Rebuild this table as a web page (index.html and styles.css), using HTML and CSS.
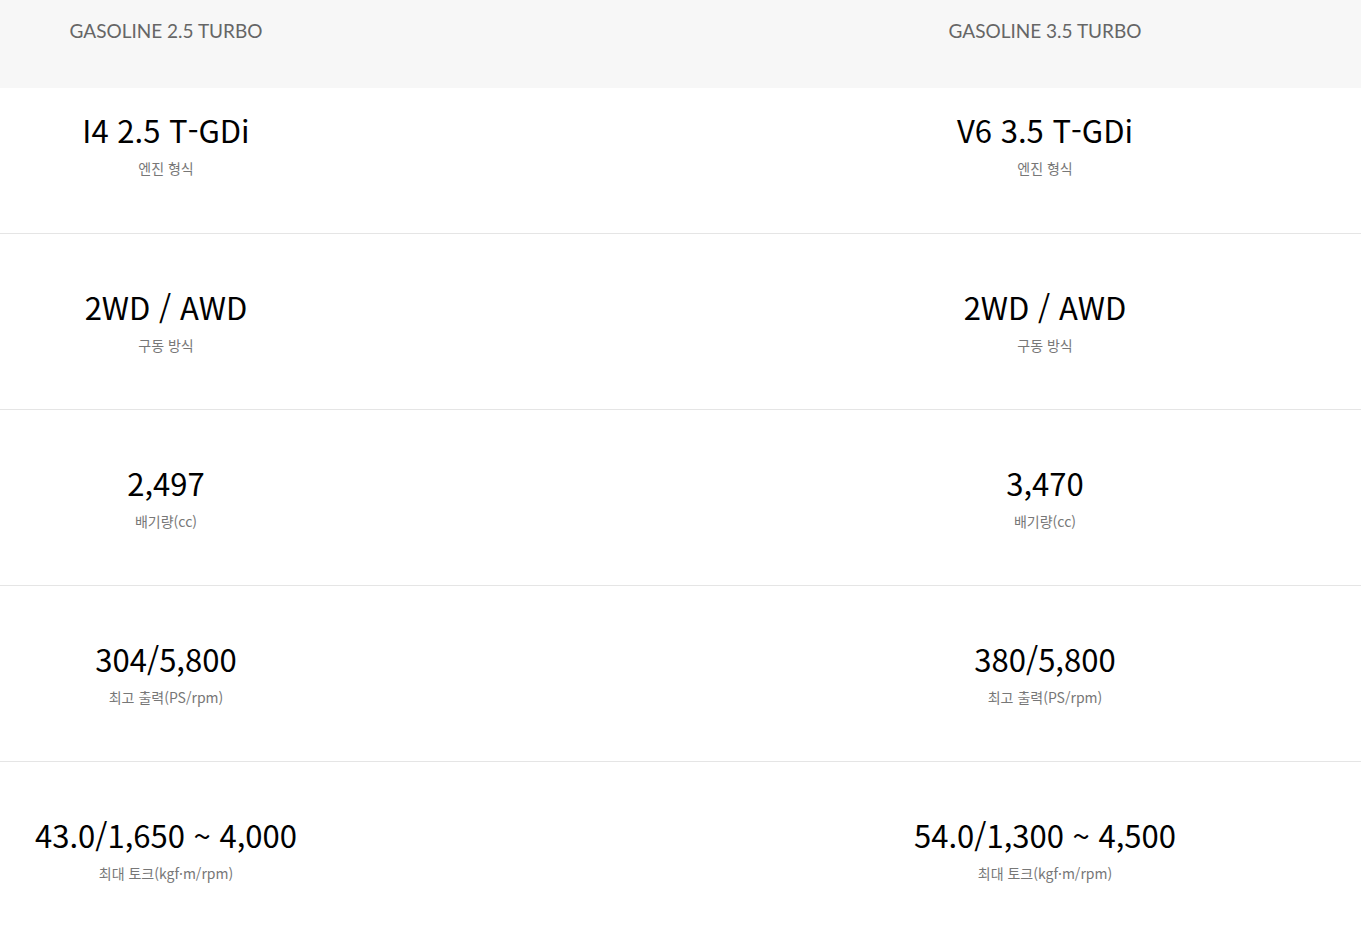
FILE: index.html
```
<!DOCTYPE html>
<html lang="ko">
<head>
<meta charset="utf-8">
<link rel="stylesheet" href="styles.css">
</head>
<body>
<div class="spec">
  <div class="head">
    <div class="col"><span class="trim">GASOLINE 2.5 TURBO</span></div>
    <div class="col"><span class="trim">GASOLINE 3.5 TURBO</span></div>
  </div>
  <div class="row first">
    <div class="col"><div class="val">I4 2.5 T-GDi</div><div class="lbl">엔진 형식</div></div>
    <div class="col"><div class="val">V6 3.5 T-GDi</div><div class="lbl">엔진 형식</div></div>
  </div>
  <div class="row">
    <div class="col"><div class="val">2WD / AWD</div><div class="lbl">구동 방식</div></div>
    <div class="col"><div class="val">2WD / AWD</div><div class="lbl">구동 방식</div></div>
  </div>
  <div class="row">
    <div class="col"><div class="val">2,497</div><div class="lbl">배기량(cc)</div></div>
    <div class="col"><div class="val">3,470</div><div class="lbl">배기량(cc)</div></div>
  </div>
  <div class="row">
    <div class="col"><div class="val">304/5,800</div><div class="lbl">최고 출력(PS/rpm)</div></div>
    <div class="col"><div class="val">380/5,800</div><div class="lbl">최고 출력(PS/rpm)</div></div>
  </div>
  <div class="row last">
    <div class="col"><div class="val">43.0/1,650 ~ 4,000</div><div class="lbl">최대 토크(kgf·m/rpm)</div></div>
    <div class="col"><div class="val">54.0/1,300 ~ 4,500</div><div class="lbl">최대 토크(kgf·m/rpm)</div></div>
  </div>
</div>
</body>
</html>
```
FILE: styles.css
```
html, body {
  margin: 0;
  padding: 0;
  background: #fff;
}
body {
  font-family: "Noto Sans CJK KR", "Noto Sans", sans-serif;
  color: #000;
}
.spec {
  width: 1361px;
}
.head, .row {
  display: flex;
  gap: 547px;
}
.col {
  width: 332px;
  text-align: center;
}
.head {
  background: #f7f7f7;
  height: 88px;
  box-sizing: border-box;
  padding-top: 19px;
}
.trim {
  font-family: Lato, "Noto Sans", sans-serif;
  font-size: 19px;
  line-height: 24px;
  color: #666;
}
.row {
  height: 176px;
  box-sizing: border-box;
  padding-top: 53px;
  border-top: 1px solid #e5e5e5;
}
.row.first {
  height: 145px;
  padding-top: 22px;
  border-top: none;
}
.val {
  font-size: 31px;
  line-height: 40px;
  color: #000;
}
.lbl {
  margin-top: 8px;
  font-size: 14px;
  line-height: 20px;
  color: #777;
}
```
